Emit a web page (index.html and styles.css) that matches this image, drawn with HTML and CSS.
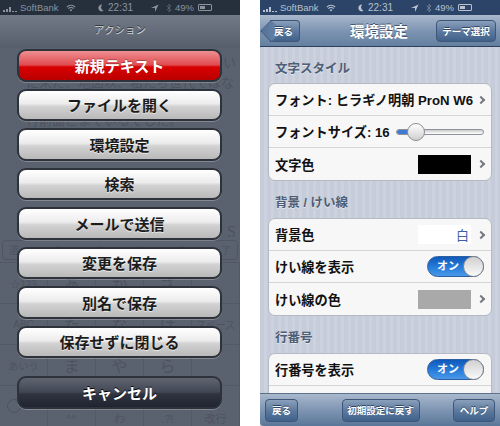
FILE: index.html
```html
<!DOCTYPE html>
<html lang="ja">

<head>
  <meta charset="UTF-8">
  <title>アクション / 環境設定</title>
  <link rel="stylesheet" href="styles.css">
</head>

<body>

  <svg class="defs" width="0" height="0">
    <symbol id="wifi" viewBox="0 0 12 9"><path d="M1 3.4a7 7 0 0 1 10 0M2.8 5.2a4.5 4.5 0 0 1 6.4 0" fill="none" stroke="currentColor" stroke-width="1.3"/><path d="M6 8.8 4.4 6.9a2.3 2.3 0 0 1 3.2 0z" fill="currentColor"/></symbol>
    <symbol id="moon" viewBox="0 0 8 10"><path d="M5.5.5a4.5 4.5 0 1 0 2 8.2A5 5 0 0 1 5.500.5z" fill="currentColor"/></symbol>
    <symbol id="arrow" viewBox="0 0 9 9"><path d="M8.500.5 0 4.500h4.500V9z" fill="currentColor"/></symbol>
    <symbol id="bt" viewBox="0 0 6 11"><path d="M.5 3 5 7.500 3 9.800V1.200L5 3.500.5 8" fill="none" stroke="currentColor"/></symbol>
    <symbol id="bars" viewBox="0 0 14 6"><path d="M0 4h2v2H0zM3 3h2v3H3zM6 1h2v5H6zM9 5h2v1H9zM12 5h2v1h-2z" fill="currentColor"/></symbol>
  </svg>

  <!-- left screen: action sheet over the editor -->
  <div class="phone">
    <div class="status status-dim">
      <svg class="ic-bars"><use href="#bars"/></svg><span class="carrier">SoftBank</span>
      <svg class="ic-wifi"><use href="#wifi"/></svg>
      <svg class="ic-moon"><use href="#moon"/></svg>
      <span class="time">22:31</span>
      <svg class="ic-arrow"><use href="#arrow"/></svg>
      <svg class="ic-bt"><use href="#bt"/></svg>
      <span class="pct">49%</span>
      <span class="battery"><i></i></span>
    </div>

    <div class="ghost">
      <p class="ghost-line line0">い</p>
      <p class="ghost-line line1">に来た、地図以、私たち世代ではな</p>
      <p class="ghost-line line2">行前面こまでいるでした。</p>
      <p class="ghost-line line3">S</p>
      <div class="ghost-bar">
        <span>選</span><span>II</span><span>II</span><span>II</span><span>II</span><span>了</span>
      </div>
      <div class="ghost-keys">
        <span>☆123</span><span>あ</span><span>か</span><span>さ</span><span></span>
        <span>ABC</span><span>た</span><span>な</span><span>は</span><span>スペース</span>
        <span>あいう</span><span>ま</span><span>や</span><span>ら</span><span></span>
        <span><i class="globe"></i></span><span>^^</span><span>わ</span><span>.?!</span><span>改行</span>
      </div>
    </div>

    <div class="sheet">
      <div class="sheet-title">アクション</div>
      <div class="sheet-buttons">
        <button class="btn btn-red">新規テキスト</button>
        <button class="btn">ファイルを開く</button>
        <button class="btn">環境設定</button>
        <button class="btn">検索</button>
        <button class="btn">メールで送信</button>
        <button class="btn">変更を保存</button>
        <button class="btn">別名で保存</button>
        <button class="btn">保存せずに閉じる</button>
        <button class="btn btn-dark">キャンセル</button>
      </div>
    </div>
  </div>

  <!-- right screen: settings -->
  <div class="phone phone-settings">
    <div class="status">
      <svg class="ic-bars"><use href="#bars"/></svg><span class="carrier">SoftBank</span>
      <svg class="ic-wifi"><use href="#wifi"/></svg>
      <svg class="ic-moon"><use href="#moon"/></svg>
      <span class="time">22:31</span>
      <svg class="ic-arrow"><use href="#arrow"/></svg>
      <svg class="ic-bt"><use href="#bt"/></svg>
      <span class="pct">49%</span>
      <span class="battery"><i></i></span>
    </div>

    <div class="navbar">
      <a class="bar-btn back"><span>戻る</span></a>
      <h1>環境設定</h1>
      <a class="bar-btn theme">テーマ選択</a>
    </div>

    <div class="settings">
      <h2>文字スタイル</h2>
      <div class="group">
        <div class="row">
          <span class="label">フォント: ヒラギノ明朝 ProN W6</span>
          <span class="chev chev-tight"></span>
        </div>
        <div class="row">
          <span class="label">フォントサイズ: 16</span>
          <div class="slider"><i class="fill"></i><i class="knob"></i></div>
        </div>
        <div class="row">
          <span class="label">文字色</span>
          <span class="swatch swatch-black"></span>
          <span class="chev"></span>
        </div>
      </div>

      <h2>背景 / けい線</h2>
      <div class="group">
        <div class="row">
          <span class="label">背景色</span>
          <span class="swatch swatch-white">白</span>
          <span class="chev"></span>
        </div>
        <div class="row">
          <span class="label">けい線を表示</span>
          <div class="toggle">オン<i></i></div>
        </div>
        <div class="row">
          <span class="label">けい線の色</span>
          <span class="swatch swatch-gray"></span>
          <span class="chev"></span>
        </div>
      </div>

      <h2>行番号</h2>
      <div class="group">
        <div class="row">
          <span class="label">行番号を表示</span>
          <div class="toggle">オン<i></i></div>
        </div>
        <div class="row"></div>
      </div>
    </div>

    <div class="toolbar">
      <a class="bar-btn tool-back">戻る</a>
      <a class="bar-btn tool-reset">初期設定に戻す</a>
      <a class="bar-btn tool-help">ヘルプ</a>
    </div>
  </div>

</body>
</html>
```

FILE: styles.css
```css
* { box-sizing: border-box; }
html, body { margin: 0; padding: 0; }
body { width: 500px; height: 426px; overflow: hidden; display: flex; gap: 20px; background: #fff; font-family: "Liberation Sans", "Noto Sans CJK JP", sans-serif; }
.defs { position: absolute; }

.phone { width: 240px; height: 426px; position: relative; overflow: hidden; background: #5f6673; }

/* status bar */
.status { height: 15px; display: flex; align-items: center; position: relative; z-index: 2; background: #2b4468; color: #b9c2cf; font-size: 9.500px; line-height: 15px; padding-left: 3px; }
.status-dim { background: #262f3c; color: #8c939e; }
.ic-bars { width: 14px; height: 6px; margin: 2px 3px 0 0; }
.carrier { width: 46px; }
.status svg { display: block; }
.ic-wifi { width: 10px; height: 8px; margin-right: 22px; }
.ic-moon { width: 6px; height: 8px; margin-right: 4px; }
.time { width: 43px; font-size: 10px; }
.ic-arrow { width: 8px; height: 8px; margin-right: 7px; }
.ic-bt { width: 6px; height: 10px; margin-right: 3px; opacity: .5; }
.pct { width: 23px; }
.battery { width: 14px; height: 7px; border: 1px solid currentColor; padding: 1px; border-radius: 1px; }
.battery i { display: block; width: 50%; height: 100%; background: currentColor; }

/* faint editor under the sheet */
.ghost { height: 411px; display: flex; flex-direction: column; color: #3a404c; padding-top: 32px; }
.ghost-line { margin: 0; font-size: 13px; line-height: 16px; white-space: nowrap; padding-left: 26px; }
.line0 { margin-top: 8px; padding: 0 4px 0 0; text-align: right; }
.line1 { margin-top: 4px; }
.line2 { margin-top: 22px; }
.line3 { margin-top: 95px; padding: 0 4px 0 0; text-align: right; font-family: "Liberation Serif", serif; font-size: 16px; }
.ghost-bar { display: flex; justify-content: space-between; margin: 0 2px; height: 20px; line-height: 20px; font-size: 10px; border: 1px solid #434955; border-radius: 4px; padding: 0 6px; }
.ghost-keys { flex: 1; display: grid; grid-template-columns: repeat(5, 48px); grid-auto-rows: 1fr; margin-top: 2px; text-align: center; font-size: 16px; }
.ghost-keys span { display: flex; align-items: center; justify-content: center; border-top: 1px solid #4a505c; border-right: 1px solid #4a505c; }
.ghost-keys span:nth-child(5n), .ghost-keys span:nth-child(5n+1) { font-size: 10px; }
.ghost-keys span:nth-child(n+17) { align-items: flex-end; font-size: 11px; line-height: 13px; }
.globe { width: 14px; height: 14px; border: 1px solid #3a404c; border-radius: 50%; margin-right: 20px; }

/* action sheet */
.sheet { position: absolute; left: 0; right: 0; top: 15px; bottom: 0; background: linear-gradient(#737a87 0, #585f6c 32px, rgba(88, 95, 108, 0.6) 33px, rgba(88, 95, 108, 0.6) 100%); }
.sheet-title { height: 32px; line-height: 30px; text-align: center; color: #cdd1d8; font-size: 10.500px; text-shadow: 0 -1px 0 #333; }
.sheet-buttons { display: flex; flex-direction: column; gap: 7px; padding: 2px 18px 0 17px; }
.btn { height: 32.500px; padding: 0; font-family: inherit; font-weight: 700; font-size: 15px; color: #1c1c1c; border: 2px solid #2e323b; border-radius: 9px; background: linear-gradient(#fff 0, #ececec 45%, #d2d2d2 55%, #b9b9b9 100%); box-shadow: 0 1px 0 rgba(255,255,255,.25); text-shadow: 0 1px 0 rgba(255,255,255,.6); }
.btn-red { color: #fff; background: linear-gradient(#ee8f92 0, #e04c50 48%, #d80000 55%, #bb0000 100%); text-shadow: 0 -1px 0 rgba(0,0,0,.3); }
.btn-dark { margin-top: 11px; color: #fff; background: linear-gradient(#5f6570 0, #414754 48%, #2f3440 55%, #1f2430 100%); text-shadow: 0 -1px 0 #000; }

/* settings screen */
.phone-settings { display: flex; flex-direction: column; background: #c6ccd9 repeating-linear-gradient(to right, #c6ccd9 0, #c6ccd9 4px, #ccd2de 4px, #ccd2de 7px); }

.navbar { height: 32px; flex: none; display: flex; align-items: center; justify-content: space-between; padding: 0 4px; position: relative; background: linear-gradient(#a9b8cc 0, #7e95b3 50%, #64809f 100%); border-bottom: 1px solid #2d3f5a; }
.navbar h1 { position: absolute; left: -1px; right: 1px; margin: 0; text-align: center; font-size: 14.500px; font-weight: 700; color: #fff; text-shadow: 0 -1px 0 #44566f; pointer-events: none; }
.bar-btn { height: 22px; display: flex; align-items: center; justify-content: center; color: #fff; font-size: 9.500px; font-weight: 700; border: 1px solid #3e5677; border-radius: 4px; background: linear-gradient(#8aa0bb 0, #5d7a9e 50%, #40618a 100%); text-shadow: 0 -1px 0 #2e4564; }
.back { width: 30px; margin-left: 6px; position: relative; border-left: 0; border-radius: 0 4px 4px 0; }
.back span { position: relative; left: -1px; z-index: 1; }
.back::before { content: ""; position: absolute; left: -7px; top: 2.500px; width: 15px; height: 15px; transform: rotate(45deg); border-left: 1px solid #3e5677; border-bottom: 1px solid #3e5677; background: linear-gradient(45deg, #52719a, #6e89a9); border-radius: 0 0 0 3px; }
.theme { width: 60px; }

.settings { flex: 1; min-height: 0; padding: 0 8px; overflow: hidden; }
.settings h2 { margin: 0; height: 36px; padding: 14px 0 0 7px; line-height: 17px; font-size: 12.500px; font-weight: 700; color: #4f5d75; text-shadow: 0 1px 0 #e4e8ee; }
.settings .group + h2 { height: 37px; }
.group { background: #f7f7f7; border: 1px solid #b4b9c3; border-radius: 7px; }
.row { height: 32px; display: flex; align-items: center; padding: 0 7px 0 6px; border-bottom: 1px solid #d5d5d8; }
.row:last-child { border-bottom: 0; }
.label { flex: 1; font-size: 13.200px; font-weight: 700; color: #111; white-space: nowrap; }

.chev { width: 6px; height: 6px; flex: none; margin: 0 0 0 7px; border-top: 2px solid #77797e; border-right: 2px solid #77797e; transform: rotate(45deg); }
.chev-tight { margin: 0; }

.swatch { width: 53px; height: 19px; flex: none; display: flex; align-items: center; justify-content: flex-end; padding-right: 2px; font-size: 13px; color: #3f5fa8; }
.swatch-black { background: #000; }
.swatch-white { background: #fff; }
.swatch-gray { background: #a9a9a9; }

.slider { width: 88px; height: 6px; position: relative; border: 1px solid #8d929b; border-radius: 3px; background: linear-gradient(#ccc, #fff); }
.slider .fill { position: absolute; left: 0; top: 0; bottom: 0; width: 16px; border-radius: 3px 0 0 3px; background: #3f7ad0; }
.slider .knob { position: absolute; left: 10px; top: -7px; width: 18px; height: 18px; border-radius: 50%; border: 1px solid #8f8f8f; background: linear-gradient(#fff, #cfcfcf); }

.toggle { width: 57px; height: 21px; position: relative; border-radius: 11px; padding-left: 9px; border: 1px solid #2b5f9f; background: linear-gradient(#0f59ba, #2a80dd 60%, #4a98e8); color: #fff; font-size: 11px; font-weight: 700; line-height: 18px; }
.toggle i { position: absolute; right: -1px; top: -1px; width: 21px; height: 21px; border-radius: 50%; border: 1px solid #888; background: linear-gradient(#d0d0d0, #fafafa); }

.toolbar { height: 33px; flex: none; display: flex; align-items: center; justify-content: space-between; padding: 0 5px; background: linear-gradient(#a9b8cc 0, #7e95b3 50%, #5a7698 100%); border-top: 1px solid #5f708a; border-radius: 0 0 0 4px; }
.tool-back { width: 33px; }
.tool-reset { width: 78px; margin-left: 10px; }
.tool-help { width: 42px; }
.toolbar .bar-btn { height: 23px; }
```
